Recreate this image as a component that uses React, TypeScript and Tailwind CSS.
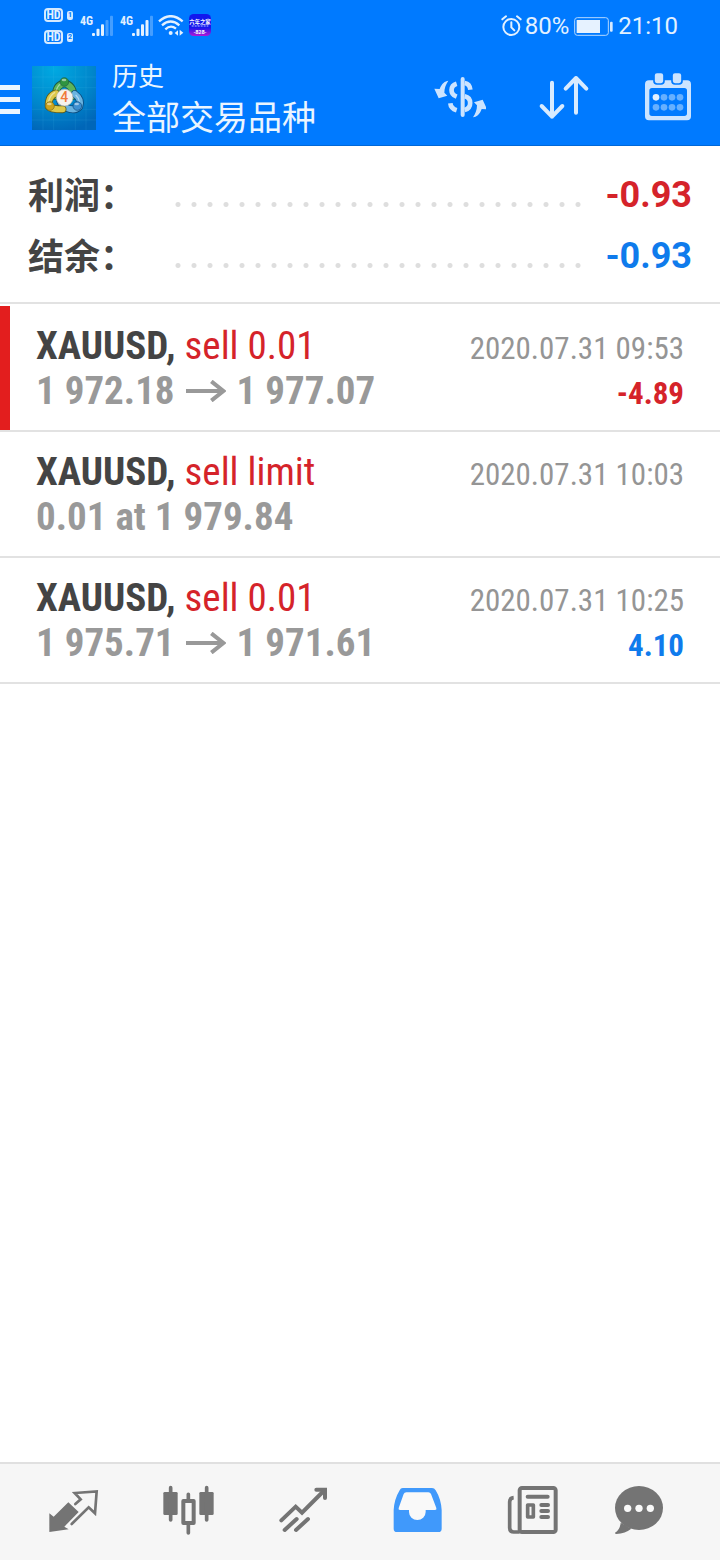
import type { ReactNode } from 'react';

interface HistoryItem {
    id: number;
    symbol: string;
    action: string;
    from: string;
    to?: string;
    time: string;
    profit?: string;
    loss: boolean;
    marked: boolean;
}

const HISTORY: HistoryItem[] = [
    { id: 1, symbol: 'XAUUSD,', action: 'sell 0.01', from: '1 972.18', to: '1 977.07', time: '2020.07.31 09:53', profit: '-4.89', loss: true, marked: true },
    { id: 2, symbol: 'XAUUSD,', action: 'sell limit', from: '0.01 at 1 979.84', time: '2020.07.31 10:03', loss: false, marked: false },
    { id: 3, symbol: 'XAUUSD,', action: 'sell 0.01', from: '1 975.71', to: '1 971.61', time: '2020.07.31 10:25', profit: '4.10', loss: false, marked: false },
];

const SUMMARY = [
    { label: '利润：', value: '-0.93', color: 'text-[#d5232a]' },
    { label: '结余：', value: '-0.93', color: 'text-[#0f7bec]' },
];

function HdBadge({ slot }: { slot: string }) {
    return (
        <div className="flex items-center gap-1">
            <span className="flex h-[14px] w-[19px] items-center justify-center rounded-sm border-2 border-[#d5eaff] text-[12px] leading-none font-bold">
                HD
            </span>
            <span className="flex h-[9px] w-[6px] items-center justify-center rounded-[2px] bg-[#d5eaff] text-[8px] leading-none font-bold text-[#007aff]">
                {slot}
            </span>
        </div>
    );
}

function Signal({ level }: { level: number }) {
    return (
        <div className="flex">
            <span className="w-[11px] text-[12px] leading-[12px] font-bold">4G</span>
            <svg viewBox="0 0 66 63" className="h-[21px] w-[22px]" fill="#e3f1ff">
                {[0, 1, 2, 3, 4].map((i) => (
                    <rect key={i} x={3 + i * 13.5} y={54 - i * 13} width="9" height={9 + i * 13} rx="3" opacity={i < level ? 1 : 0.3} />
                ))}
            </svg>
        </div>
    );
}

function StatusBar() {
    return (
        <div className="flex h-[50px] items-center justify-between pr-[42px] pl-[44px] text-[#e3f1ff]">
            <div className="flex items-center">
                <div className="flex flex-col gap-2 pt-[2px]">
                    <HdBadge slot="1" />
                    <HdBadge slot="2" />
                </div>
                <div className="ml-[7px] flex gap-[7px]">
                    <Signal level={3} />
                    <Signal level={4} />
                </div>
                <svg viewBox="0 0 78 63" className="ml-[5px] h-[21px] w-[26px]" fill="none" stroke="#e3f1ff" strokeWidth="7">
                    <path d="M3 19Q38 -12 74 19" />
                    <path d="M12 31Q38 8 64 31" />
                    <path d="M22 43Q38 28 54 41" />
                    <circle cx="38" cy="54" r="6" fill="#e3f1ff" stroke="none" />
                    <path d="M60 46L50 54L60 62ZM65 44L76 53L65 62Z" fill="#e3f1ff" stroke="none" />
                </svg>
                <svg viewBox="0 0 66 66" className="ml-[5px] h-[22px] w-[22px]">
                    <defs>
                        <linearGradient id="badge" x1="0" y1="0" x2="0" y2="1">
                            <stop offset="0.6" stopColor="#1218ee" />
                            <stop offset="1" stopColor="#b316d6" />
                        </linearGradient>
                    </defs>
                    <rect width="66" height="66" rx="14" fill="url(#badge)" />
                    <text x="33" y="31" textAnchor="middle" fontSize="16" fontWeight="700" fontFamily="Noto Sans CJK SC, sans-serif" fill="#fff">六年之家</text>
                    <path d="M8 36H58" stroke="#b8c0ff" strokeWidth="3" strokeDasharray="6 3" />
                    <text x="33" y="61" textAnchor="middle" fontSize="17" fontWeight="700" fontFamily="Roboto, sans-serif" fill="#fff">·828·</text>
                </svg>
            </div>
            <div className="flex items-center pt-[2px] font-[Roboto,sans-serif] text-2xl leading-6">
                <svg viewBox="0 0 63 63" className="mr-[3px] mb-[2px] h-[21px] w-[21px]" fill="none" stroke="#e3f1ff" strokeWidth="6" strokeLinecap="round">
                    <circle cx="31" cy="36" r="24" />
                    <path d="M31 22V37L40 46" />
                    <path d="M4 13L15 4M48 4L59 13" />
                </svg>
                <span>80%</span>
                <svg viewBox="0 0 117 57" className="mx-[5px] h-[19px] w-[39px]">
                    <rect x="2" y="2" width="101" height="53" rx="8" fill="none" stroke="#b3d8ff" strokeWidth="3" />
                    <rect x="8" y="9" width="70" height="39" fill="#e6f2ff" />
                    <rect x="108" y="14" width="8" height="30" rx="3" fill="#d5eaff" />
                </svg>
                <span>21:10</span>
            </div>
        </div>
    );
}

function AppLogo() {
    return (
        <svg viewBox="0 0 192 192" className="h-16 w-16">
            <defs>
                <radialGradient id="sky" cx="0.35" cy="0.05" r="1">
                    <stop offset="0" stopColor="#00a9e2" />
                    <stop offset="0.6" stopColor="#0086cb" />
                    <stop offset="1" stopColor="#0066b8" />
                </radialGradient>
            </defs>
            <rect width="192" height="192" fill="url(#sky)" />
            <path d="M33 0V192M65 0V192M130 0V192M162 0V192M0 33H192M0 65H192M0 130H192M0 162H192" stroke="#4ec2e6" strokeOpacity="0.2" strokeWidth="2" />
            <g fill="none" strokeLinecap="round" strokeLinejoin="round">
                <path d="M72 90Q70 58 97 52Q124 58 124 90" stroke="#1c5c45" strokeWidth="23" />
                <path d="M72 90Q70 58 97 52Q124 58 124 90" stroke="#5db45a" strokeWidth="18" />
                <path d="M128 84Q150 100 142 122Q128 136 104 126Q88 118 84 104" stroke="#0b4a7d" strokeWidth="23" />
                <path d="M128 84Q150 100 142 122Q128 136 104 126Q88 118 84 104" stroke="#69b3e0" strokeWidth="18" />
                <path d="M72 82Q48 90 50 122Q56 130 92 130" stroke="#5b5a1c" strokeWidth="23" />
                <path d="M72 82Q48 90 50 122Q56 130 92 130" stroke="#dcc84a" strokeWidth="18" />
                <path d="M68 80Q54 88 50 106M74 70Q80 54 90 52M132 88Q142 98 142 108" stroke="#fff" strokeOpacity="0.45" strokeWidth="4" />
            </g>
            <circle cx="97" cy="48" r="13" fill="#2f9440" stroke="#1c5c45" strokeWidth="2" />
            <circle cx="54" cy="120" r="13" fill="#cfa51c" stroke="#7b6a1a" strokeWidth="2" />
            <circle cx="136" cy="120" r="13" fill="#3d8fd0" stroke="#0b4a7d" strokeWidth="2" />
            <g fill="#fff" fillOpacity="0.5">
                <ellipse cx="96" cy="42" rx="7" ry="4" />
                <ellipse cx="52" cy="114" rx="7" ry="4" />
                <ellipse cx="134" cy="114" rx="7" ry="4" />
            </g>
            <circle cx="98" cy="95" r="25" fill="#f6f2ec" stroke="#b9b5a8" strokeWidth="2" />
            <text x="97" y="109" textAnchor="middle" fontSize="42" fontWeight="500" fontFamily="Roboto, sans-serif" fill="#f07a3a">4</text>
        </svg>
    );
}

function Header() {
    return (
        <header className="border-b border-[#0068d8] bg-[#007aff]">
            <StatusBar />
            <div className="flex h-[95px] items-center justify-between pr-[26px]">
                <div className="flex items-center">
                    <button type="button" aria-label="菜单" className="flex w-5 flex-col gap-[7px] pt-1">
                        <span className="h-[5px] w-full bg-[#eaf5ff]" />
                        <span className="h-[5px] w-full bg-[#eaf5ff]" />
                        <span className="h-[5px] w-full bg-[#eaf5ff]" />
                    </button>
                    <div className="ml-3">
                        <AppLogo />
                    </div>
                    <div className="ml-4 font-['Noto_Sans_CJK_SC',sans-serif] text-[#eaf5ff]">
                        <p className="text-[26px] leading-9">历史</p>
                        <h1 className="text-[34px] leading-[46px]">全部交易品种</h1>
                    </div>
                </div>
                <div className="flex gap-[52px]">
                    <button type="button" aria-label="交易品种">
                        <svg viewBox="0 0 156 156" className="h-[52px] w-[52px]" fill="none" stroke="#cce4ff" strokeWidth="12">
                            <g fill="#cce4ff" stroke="none">
                                <path d="M43 26C33 27 23 34 17 51L1 50L14 79L40 71L31 62C31 48 36 36 43 26Z" />
                                <path d="M43 26C33 27 23 34 17 51L1 50L14 79L40 71L31 62C31 48 36 36 43 26Z" transform="rotate(180 80 81)" />
                            </g>
                            <path d="M86 21V129" strokeLinecap="round" />
                            <path d="M68 35C48 41 47 66 68 74M49 94C50 105 58 112 68 115" strokeWidth="14" />
                            <path d="M92 33C102 35 108 42 109 53M92 73C114 78 114 108 92 114" strokeWidth="14" />
                        </svg>
                    </button>
                    <button type="button" aria-label="排序">
                        <svg viewBox="0 0 156 156" className="h-[52px] w-[52px]" fill="none" stroke="#d8ebff" strokeWidth="12" strokeLinecap="round" strokeLinejoin="round">
                            <path d="M42 32V134M11 102L42 134L73 102" />
                            <path d="M114 122V18M83 50L114 18L145 50" />
                        </svg>
                    </button>
                    <button type="button" aria-label="日期">
                        <svg viewBox="0 0 156 156" className="h-[52px] w-[52px]" fill="#cce4ff">
                            <path fillRule="evenodd" d="M21 25H135Q147 25 147 37V133Q147 145 135 145H21Q9 145 9 133V37Q9 25 21 25ZM30 48Q22 48 22 56V124Q22 132 30 132H127Q135 132 135 124V56Q135 48 127 48Z" />
                            <rect x="36" y="1" width="30" height="35" rx="9" stroke="#007aff" strokeWidth="5" />
                            <rect x="90" y="1" width="30" height="35" rx="9" stroke="#007aff" strokeWidth="5" />
                            <circle cx="42" cy="76" r="10" fill="#e3f1ff" />
                            <g fill="#66b0ff">
                                <circle cx="66" cy="76" r="10" />
                                <circle cx="90" cy="76" r="10" />
                                <circle cx="114" cy="76" r="10" />
                                <circle cx="42" cy="106" r="10" />
                                <circle cx="66" cy="106" r="10" />
                                <circle cx="90" cy="106" r="10" />
                                <circle cx="114" cy="106" r="10" />
                            </g>
                        </svg>
                    </button>
                </div>
            </div>
        </header>
    );
}

function Summary() {
    return (
        <dl className="border-b-2 border-[#e2e2e2] px-7 pt-[18px] pb-[16px] text-4xl font-bold">
            {SUMMARY.map((row) => (
                <div key={row.label} className="flex h-[61px] items-center">
                    <dt className="w-[142px] pb-[3px] font-['Noto_Sans_CJK_SC',sans-serif] leading-[58px] text-[#444444]">{row.label}</dt>
                    <div className="mt-5 h-[5px] flex-1 bg-[radial-gradient(circle,#dedede_2px,transparent_3px)] bg-[length:16px_5px] bg-repeat-x" />
                    <dd className={`ml-5 pt-px font-[Roboto,sans-serif] leading-[60px] ${row.color}`}>{row.value}</dd>
                </div>
            ))}
        </dl>
    );
}

function HistoryRow({ item }: { item: HistoryItem }) {
    return (
        <li className="flex border-b-2 border-[#e2e2e2]">
            <div className={`w-[10px] ${item.marked ? 'bg-[#e31e1e]' : ''}`} />
            <div className="flex-1 pt-[18px] pr-9 pb-4 pl-[26px]">
                <div className="flex h-[45px] items-baseline justify-between">
                    <p className="text-[39px] leading-[45px] text-[#d5232a]">
                        <span className="font-bold text-[#444444]">{item.symbol}</span> {item.action}
                    </p>
                    <time className="text-[31px] leading-[45px] text-[#959595]">{item.time}</time>
                </div>
                <div className="flex h-[45px] items-baseline justify-between font-bold">
                    <p className="text-[39px] leading-[45px] text-[#999999]">
                        {item.from}
                        {item.to && (
                            <>
                                <svg viewBox="0 0 120 66" className="mx-[11px] mb-[6px] inline h-[22px] w-[40px]" fill="none" stroke="#999999" strokeWidth="12">
                                    <path d="M0 33H112M76 4L112 33L76 62" />
                                </svg>
                                {item.to}
                            </>
                        )}
                    </p>
                    {item.profit && (
                        <span className={`text-[31px] leading-[45px] ${item.loss ? 'text-[#d5232a]' : 'text-[#0f7bec]'}`}>{item.profit}</span>
                    )}
                </div>
            </div>
        </li>
    );
}

function NavButton({ label, children }: { label: string; children: ReactNode }) {
    return (
        <button type="button" aria-label={label} className="flex items-center justify-center">
            <svg viewBox="0 0 156 156" className="h-[52px] w-[52px]" fill="none" stroke="#747474">
                {children}
            </svg>
        </button>
    );
}

function BottomNav() {
    return (
        <nav className="grid h-[98px] grid-cols-[repeat(5,115fr)_97fr] border-t-2 border-[#e0e0e0] bg-[#f6f6f6] pr-[34px] pb-1 pl-4">
            <NavButton label="行情">
                <path d="M7 88L20 98L64 55L95 84L52 128L65 136L7 144Z" fill="#747474" stroke="none" />
                <path d="M74 120L125 70L144 88L149 22L83 27L101 46L85 60" strokeWidth="8" strokeLinecap="round" />
            </NavButton>
            <NavButton label="图表">
                <rect x="4" y="24" width="43" height="69" rx="4" fill="#747474" stroke="none" />
                <rect x="112" y="24" width="43" height="69" rx="4" fill="#747474" stroke="none" />
                <rect x="64" y="51" width="31" height="66" strokeWidth="12" strokeLinejoin="round" />
                <path d="M26 11V108M134 11V108M79 31V46M79 122V147" strokeWidth="11" strokeLinecap="round" />
            </NavButton>
            <NavButton label="交易">
                <path d="M13 109L56 68L75 86L143 18M23 138L59 105M57 138L93 105" strokeWidth="12" strokeLinecap="round" />
                <path d="M118 17H144V42" strokeWidth="12" strokeLinecap="round" />
            </NavButton>
            <NavButton label="历史">
                <path
                    d="M35 12H123Q130 12 134 19Q150 45 152 78V134Q152 144 142 144H18Q8 144 8 134V78Q10 45 26 19Q29 12 35 12Z"
                    fill="#4099fb"
                    stroke="none"
                />
                <path d="M46 25H112Q118 25 120 30L136 72Q138 78 132 78H104V84A25 24 0 0 1 54 84V78H27Q21 78 23 72L38 30Q40 25 46 25Z" fill="#f9f9f9" stroke="none" />
            </NavButton>
            <NavButton label="新闻">
                <rect x="41" y="12" width="108" height="132" rx="7" strokeWidth="12" />
                <path d="M23 41Q11 42 11 53V132Q11 144 23 144H41" strokeWidth="11" />
                <path d="M65 38H125M106 63H126M106 81H126M106 99H126" strokeWidth="12" strokeLinecap="round" />
                <rect x="65" y="63" width="17" height="36" strokeWidth="11" strokeLinejoin="round" />
            </NavButton>
            <NavButton label="信息">
                <path d="M26 116Q24 138 9 146Q9 150 13 150Q40 148 58 134Z" fill="#747474" stroke="none" />
                <ellipse cx="81" cy="72" rx="72" ry="66" fill="#747474" stroke="none" />
                <g fill="#f9f9f9" stroke="none">
                    <circle cx="47" cy="73" r="11" />
                    <circle cx="81" cy="73" r="11" />
                    <circle cx="115" cy="73" r="11" />
                </g>
            </NavButton>
        </nav>
    );
}

export default function App() {
    return (
        <div className="flex min-h-screen flex-col bg-white font-['Roboto_Condensed',Roboto,sans-serif]">
            <Header />
            <main className="flex-1">
                <Summary />
                <ul className="pt-[2px]">
                    {HISTORY.map((item) => (
                        <HistoryRow key={item.id} item={item} />
                    ))}
                </ul>
            </main>
            <BottomNav />
        </div>
    );
}
